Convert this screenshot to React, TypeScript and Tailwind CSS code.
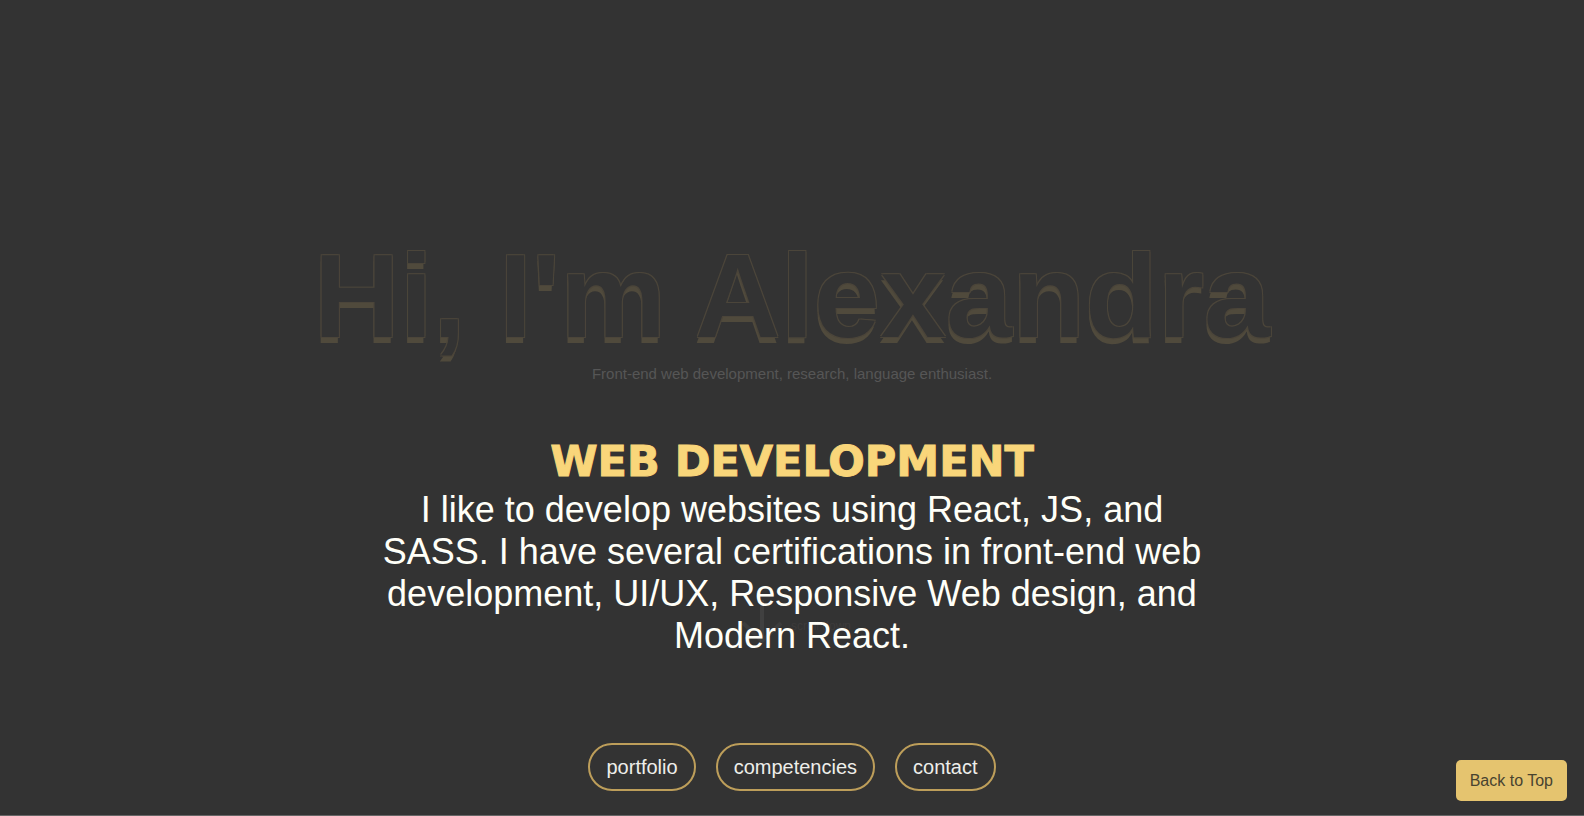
const links = [
  { label: "portfolio", href: "#portfolio" },
  { label: "competencies", href: "#competencies" },
  { label: "contact", href: "#contact" },
];

function Hero() {
  return (
    <header className="absolute inset-x-0 top-0 flex flex-col items-center pt-[232px] text-center">
      <h1 className="text-[119px] leading-[128px] font-bold text-[#333] [text-shadow:-1px_-1px_0_#4b453a,1px_-1px_0_#4b453a,-1px_1px_0_#4b453a,1px_1px_0_#4b453a,-1px_6px_0_#504a3c]">
        Hi, I'm Alexandra
      </h1>
      <p className="mt-1 text-[15px] leading-5 text-[#565656]">
        Front-end web development, research, language enthusiast.
      </p>
      <div className="mt-[216px] flex items-center gap-2 pl-2 text-xs text-[#3d3b3b]">
        <svg width="42" height="44" viewBox="0 0 42 44" fill="none" stroke="#404040" strokeWidth="4">
          <path d="M2 23L21 41L40 23" stroke="#3c3c3c" />
          <path d="M21 0V42" />
        </svg>
        <span className="pt-2">scroll down</span>
      </div>
    </header>
  );
}

export default function App() {
  return (
    <div className="relative flex min-h-screen flex-col border-b border-[#666] bg-[#333] font-['Liberation_Sans',Arial,sans-serif]">
      <Hero />
      <main className="relative flex flex-1 flex-col items-center justify-end pb-6">
        <section className="w-full max-w-[840px] text-center">
          <h2 className="font-['DejaVu_Sans',sans-serif] text-[43px] leading-[48px] font-bold text-[#f9d67a] [-webkit-text-stroke:1px_#f9d67a]">
            WEB DEVELOPMENT
          </h2>
          <p className="mt-1 text-[36px] leading-[42px] text-[#fffff8]">
            I like to develop websites using React, JS, and SASS. I have several certifications in
            front-end web development, UI/UX, Responsive Web design, and Modern React.
          </p>
        </section>
        <nav className="mt-[86px] flex gap-5">
          {links.map((link) => (
            <a
              key={link.label}
              href={link.href}
              className="rounded-3xl border-2 border-[#bd9e5a] px-4 py-[10px] text-[20px] leading-6 text-[#eeeeea]"
            >
              {link.label}
            </a>
          ))}
        </nav>
      </main>
      <button
        type="button"
        className="fixed right-[17px] bottom-[15px] rounded-[5px] bg-[#e5c46f] px-[14px] py-2 text-base leading-[25px] text-[#48432f]"
      >
        Back to Top
      </button>
    </div>
  );
}
